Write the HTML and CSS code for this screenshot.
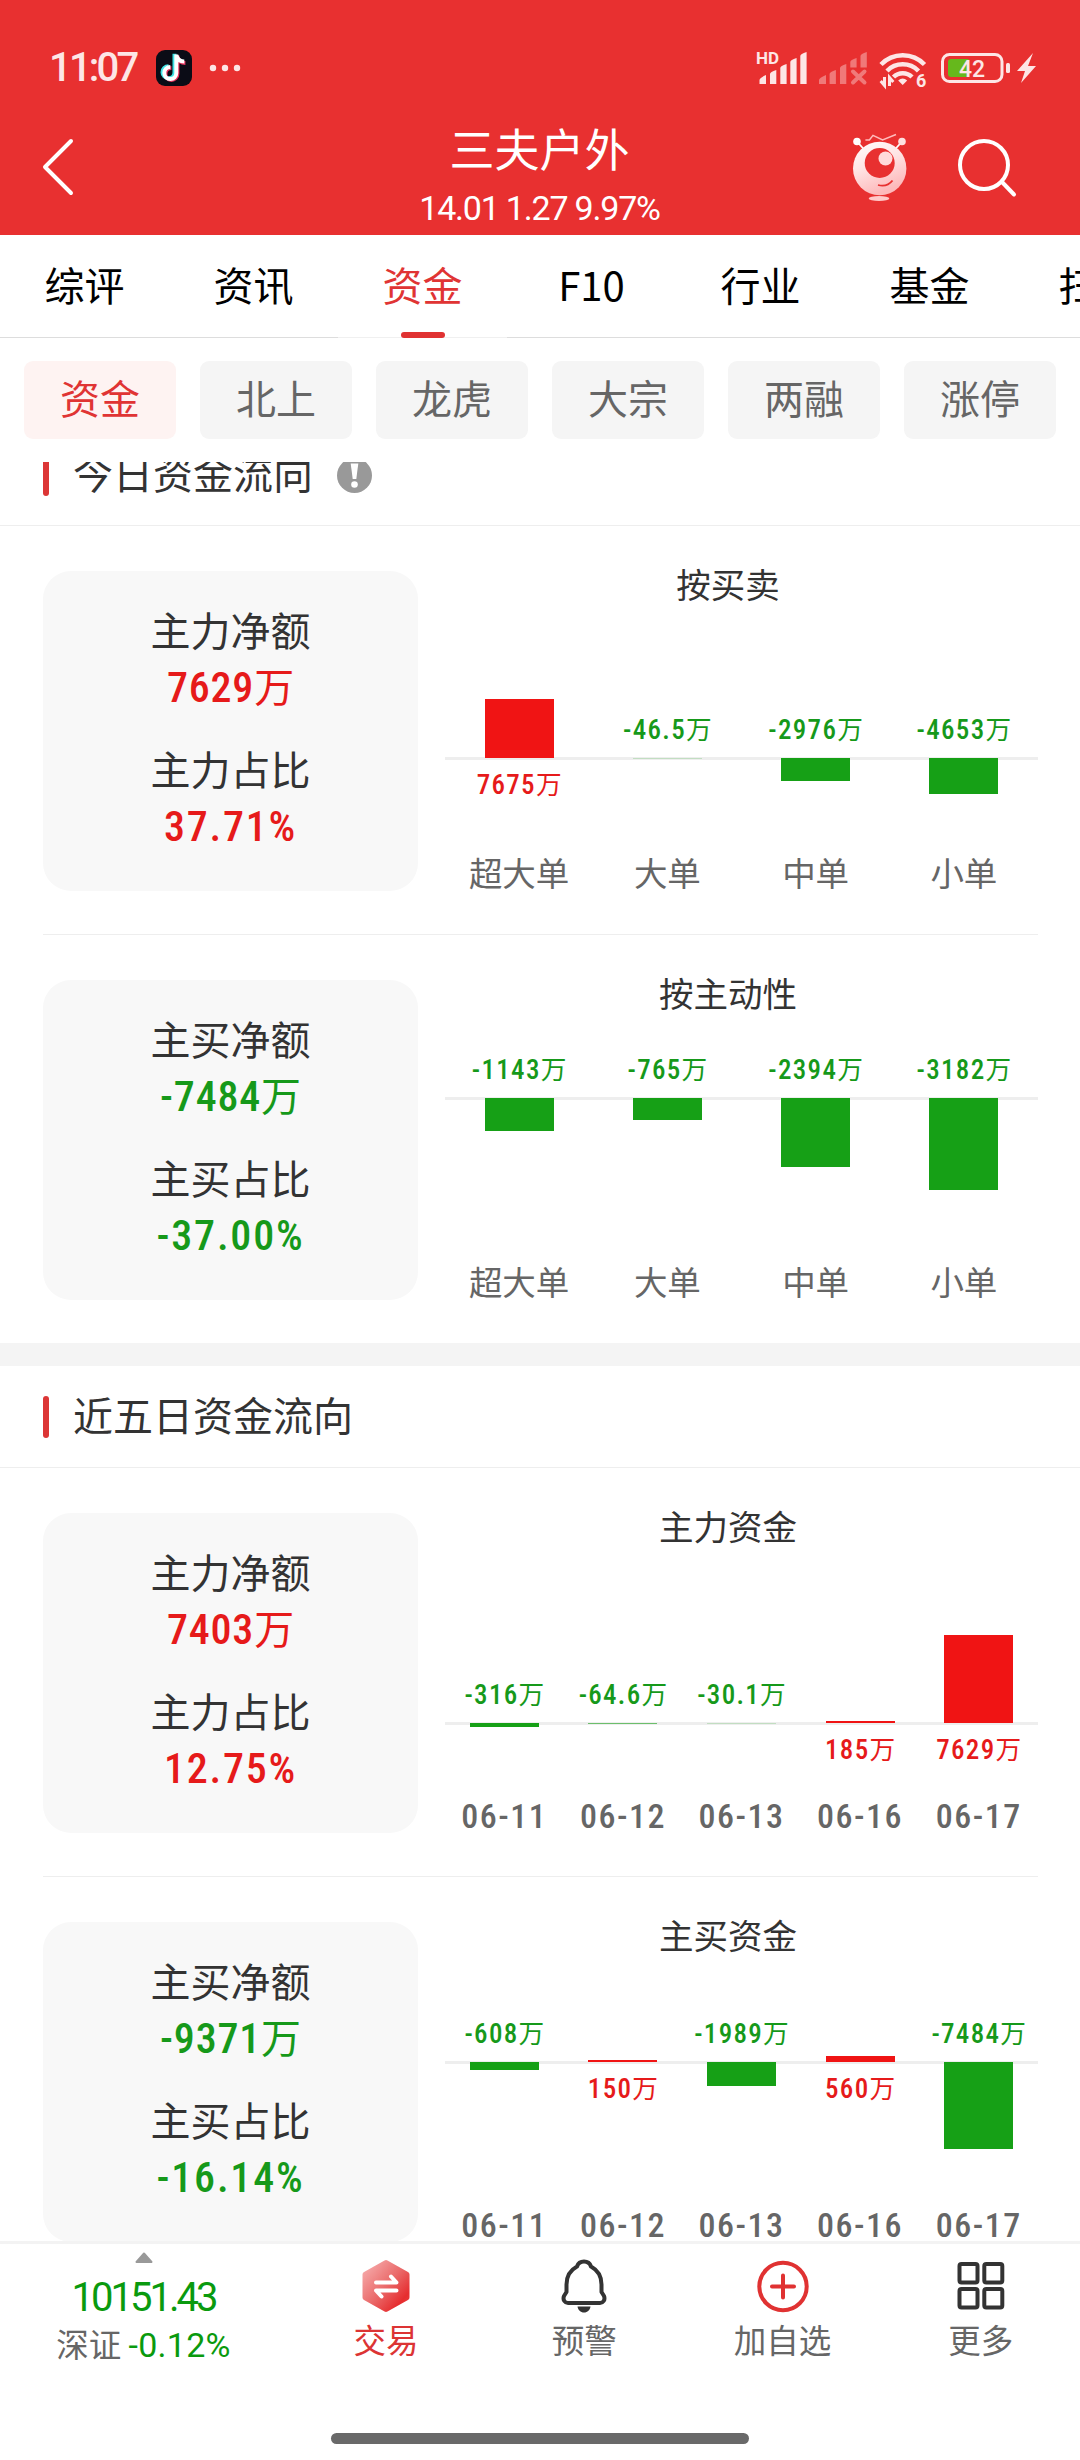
FILE: index.html
```html
<!DOCTYPE html>
<html lang="zh-CN">
<head>
<meta charset="UTF-8" />
<meta name="viewport" content="width=device-width, initial-scale=1.0" />
<title>三夫户外 - 资金</title>
<link rel="stylesheet" href="styles.css">
</head>
<body>

<header class="header">
  <div class="status">
    <span class="clock">11:07</span>
    <svg class="app-icon" width="36" height="36" viewBox="0 0 36 36">
      <rect width="36" height="36" rx="9" fill="#0b0c16"/>
      <g fill="none" stroke-width="4">
        <path d="M19 4v18.500a6 6 0 1 1-6-6M19 5c1 4 4 6.500 8 6.500" stroke="#3fe3e6" transform="translate(-.5 -.3)"/>
        <path d="M21 5v18.500a6 6 0 1 1-6-6M21 6c1 4 4 6.500 8 6.500" stroke="#e8345f" transform="translate(.4 .4)"/>
        <path d="M20.300 4.500v18.500a6 6 0 1 1-6-6M20.300 5c1 4 4 6.500 8 6.500" stroke="#fff"/>
      </g>
    </svg>
    <svg class="more-dots" width="32" height="8" viewBox="0 0 32 8" fill="#fde6e6">
      <circle cx="4" cy="4" r="3.200"/><circle cx="16" cy="4" r="3.200"/><circle cx="28" cy="4" r="3.200"/>
    </svg>
    <svg class="status-right" width="284" height="44" viewBox="756 46 284 44" fill="#fde6e6">
      <text class="hd" x="756" y="64">HD</text>
      <!-- sim 1 -->
      <path d="M759.500 84v-4q0-2 6.500-5v9zM770 84V74q0-2 6.300-4v14zM780.300 84V68q0-2 6.300-4v20zM790.300 84V62q0-2 6.300-4v26zM800.300 84V56q0-2 6.300-4v32z"/>
      <!-- sim 2 -->
      <g opacity=".4">
        <path d="M819 84v-4q0-2 7-5v9zM829.600 84V74q0-2 6.300-4v14zM840 84V68q0-2 6.300-4v20zM850.300 67.500V62q0-2 6.300-4v9.500zM860.500 67.500V56q0-2 6.300-4v15.500z"/>
        <path d="M853 71.500l11.500 11M864.500 71.500l-11.500 11" stroke="#fde6e6" stroke-width="4" stroke-linecap="round"/>
      </g>
      <!-- wifi -->
      <g fill="none" stroke="#fde6e6" stroke-width="4.500">
        <path d="M881 64.500a30 30 0 0 1 43.500 0"/>
        <path d="M887 71a22 22 0 0 1 31.500 0"/>
        <path d="M893.500 77a13 13 0 0 1 18.500 0"/>
      </g>
      <path d="M902.700 85l-4.500-4.500q4.500-4 9 0z"/>
      <path d="M884.500 77v8.500l-3.800-4.500M889.500 86v-8.500l3.800 4.500" fill="none" stroke="#fde6e6" stroke-width="3"/>
      <text class="gen" x="916" y="87">6</text>
      <!-- battery -->
      <rect x="942.500" y="54.500" width="59.500" height="27" rx="7" fill="none" stroke="#fde6e6" stroke-width="3"/>
      <path d="M951 59h17.500v18H951a3 3 0 0 1-3-3V62a3 3 0 0 1 3-3z" fill="#66b81c"/>
      <rect x="1006" y="63" width="4" height="10" rx="1.500"/>
      <text class="level" x="959" y="76.500">42</text>
      <path d="M1033 53l-16 18h8l-4 12 15-17h-8z"/>
    </svg>
  </div>
  <div class="titlebar">
    <svg class="back" width="34" height="60" viewBox="0 0 34 60">
      <path d="M29 4L3 30l26 26" fill="none" stroke="#fff" stroke-width="4" stroke-linecap="round" stroke-linejoin="round"/>
    </svg>
    <div class="stock">
      <h1>三夫户外</h1>
      <p>14.01 1.27 9.97%</p>
    </div>
    <div class="tools">
      <svg width="56" height="70" viewBox="852 132 56 70">
        <defs>
          <linearGradient id="mascot" x1="0" y1="0" x2=".4" y2="1">
            <stop offset="0" stop-color="#fff"/><stop offset=".5" stop-color="#ffe3e3"/><stop offset="1" stop-color="#fdb9bb"/>
          </linearGradient>
        </defs>
        <path d="M857 141.500l8 9M902 141.500l-8 9" stroke="#fff" stroke-width="1.800"/>
        <circle cx="857" cy="141.500" r="3.800" fill="#fff"/>
        <circle cx="902" cy="141.500" r="3.800" fill="#fde0e0"/>
        <path d="M865.400 140h4l3.600-4.600 9.600 4.600 13.400-5.500" fill="none" stroke="#fbb" stroke-width="1.500"/>
        <circle cx="879.700" cy="168.500" r="26.700" fill="url(#mascot)"/>
        <circle cx="879.700" cy="163" r="15" fill="#e83030"/>
        <circle cx="885.500" cy="158.500" r="7" fill="#ffdada"/>
        <path d="M878 185q9 2.500 14.500-4.500" fill="none" stroke="#e83030" stroke-width="1.800"/>
        <ellipse cx="879" cy="198.600" rx="10.300" ry="2.500" fill="#ffc9c9"/>
      </svg>
      <svg width="60" height="60" viewBox="0 0 60 60" fill="none" stroke="#fff" stroke-width="4" stroke-linecap="round">
        <circle cx="27" cy="27" r="24"/><path d="M45 44l12 12.500"/>
      </svg>
    </div>
  </div>
</header>

<nav class="tabs">
  <a>综评</a><a>资讯</a><a class="active">资金</a><a>F10</a><a>行业</a><a>基金</a><a>扫雷</a>
</nav>

<div class="chips">
  <span class="active">资金</span><span>北上</span><span>龙虎</span><span>大宗</span><span>两融</span><span>涨停</span>
</div>

<main class="content">
  <section class="today">
    <h2><span>今日资金流向</span>
      <svg width="35" height="35" viewBox="0 0 35 35">
        <circle cx="17.500" cy="17.500" r="17.500" fill="#999"/>
        <path d="M13.700 5.500h7.600l-2 15.500h-3.600z" fill="#fff"/><circle cx="17.500" cy="26.500" r="3.300" fill="#fff"/>
      </svg>
    </h2>
    <div class="row">
      <div class="card">
        <p>主力净额</p><b class="up">7629<span class="unit">万</span></b>
        <p>主力占比</p><b class="up pct">37.71%</b>
      </div>
      <div class="chart">
        <h3>按买卖</h3>
        <div class="plot" style="--axis: 148px">
          <div class="col"><i class="bar up" style="height: 59px"></i><em class="up">7675<span class="unit">万</span></em></div>
          <div class="col neg"><em class="down">-46.5<span class="unit">万</span></em><i class="bar down faint" style="height: 1px"></i></div>
          <div class="col neg"><em class="down">-2976<span class="unit">万</span></em><i class="bar down" style="height: 23px"></i></div>
          <div class="col neg"><em class="down">-4653<span class="unit">万</span></em><i class="bar down" style="height: 36px"></i></div>
        </div>
        <div class="labels"><span>超大单</span><span>大单</span><span>中单</span><span>小单</span></div>
      </div>
    </div>
    <div class="row">
      <div class="card">
        <p>主买净额</p><b class="down">-7484<span class="unit">万</span></b>
        <p>主买占比</p><b class="down pct">-37.00%</b>
      </div>
      <div class="chart">
        <h3>按主动性</h3>
        <div class="plot" style="--axis: 79px">
          <div class="col neg"><em class="down">-1143<span class="unit">万</span></em><i class="bar down" style="height: 33px"></i></div>
          <div class="col neg"><em class="down">-765<span class="unit">万</span></em><i class="bar down" style="height: 22px"></i></div>
          <div class="col neg"><em class="down">-2394<span class="unit">万</span></em><i class="bar down" style="height: 69px"></i></div>
          <div class="col neg"><em class="down">-3182<span class="unit">万</span></em><i class="bar down" style="height: 92px"></i></div>
        </div>
        <div class="labels"><span>超大单</span><span>大单</span><span>中单</span><span>小单</span></div>
      </div>
    </div>
  </section>

  <section>
    <h2><span>近五日资金流向</span></h2>
    <div class="row">
      <div class="card">
        <p>主力净额</p><b class="up">7403<span class="unit">万</span></b>
        <p>主力占比</p><b class="up pct">12.75%</b>
      </div>
      <div class="chart">
        <h3>主力资金</h3>
        <div class="plot" style="--axis: 171px">
          <div class="col neg"><em class="down">-316<span class="unit">万</span></em><i class="bar down" style="height: 4px"></i></div>
          <div class="col neg"><em class="down">-64.6<span class="unit">万</span></em><i class="bar down half" style="height: 1px"></i></div>
          <div class="col neg"><em class="down">-30.1<span class="unit">万</span></em><i class="bar down faint" style="height: 1px"></i></div>
          <div class="col"><i class="bar up" style="height: 2px"></i><em class="up">185<span class="unit">万</span></em></div>
          <div class="col"><i class="bar up" style="height: 88px"></i><em class="up">7629<span class="unit">万</span></em></div>
        </div>
        <div class="labels dates"><span>06-11</span><span>06-12</span><span>06-13</span><span>06-16</span><span>06-17</span></div>
      </div>
    </div>
    <div class="row">
      <div class="card">
        <p>主买净额</p><b class="down">-9371<span class="unit">万</span></b>
        <p>主买占比</p><b class="down pct">-16.14%</b>
      </div>
      <div class="chart">
        <h3>主买资金</h3>
        <div class="plot" style="--axis: 101px">
          <div class="col neg"><em class="down">-608<span class="unit">万</span></em><i class="bar down" style="height: 8px"></i></div>
          <div class="col"><i class="bar up" style="height: 2px"></i><em class="up">150<span class="unit">万</span></em></div>
          <div class="col neg"><em class="down">-1989<span class="unit">万</span></em><i class="bar down" style="height: 24px"></i></div>
          <div class="col"><i class="bar up" style="height: 6px"></i><em class="up">560<span class="unit">万</span></em></div>
          <div class="col neg"><em class="down">-7484<span class="unit">万</span></em><i class="bar down" style="height: 87px"></i></div>
        </div>
        <div class="labels dates"><span>06-11</span><span>06-12</span><span>06-13</span><span>06-16</span><span>06-17</span></div>
      </div>
    </div>
  </section>
</main>

<footer class="bottom">
  <div class="actions">
    <div class="index">
      <svg width="20" height="12" viewBox="0 0 20 12"><path d="M10 1.500L17.500 10h-15z" fill="#999" stroke="#999" stroke-width="2" stroke-linejoin="round"/></svg>
      <strong>10151.43</strong>
      <span>深证 <b>-0.12%</b></span>
    </div>
    <a class="trade">
      <svg width="54" height="54" viewBox="0 0 54 54">
        <defs>
          <linearGradient id="hex" x1="0" y1="0" x2="1" y2="1">
            <stop offset="0" stop-color="#f7aeae"/><stop offset=".5" stop-color="#ea6a6a"/><stop offset=".85" stop-color="#e62d2f"/><stop offset="1" stop-color="#e83c3c"/>
          </linearGradient>
        </defs>
        <path d="M27 4L47.500 15.500v23L27 50 6.500 38.500v-23z" fill="url(#hex)" stroke="url(#hex)" stroke-width="6" stroke-linejoin="round"/>
        <path d="M17 23.500h20.500l-5.500-6M37.500 31.500H17l5.500 6" fill="none" stroke="#fff" stroke-width="4" stroke-linecap="round" stroke-linejoin="round"/>
      </svg>
      交易
    </a>
    <a>
      <svg width="54" height="54" viewBox="0 0 54 54">
        <path d="M27 2.500c3.500 0 6 2 7 5 6.500 3.500 10.500 10 10.500 18v7.500l2.500 4c1.500 4-1 7-4 7H11c-3 0-5.500-3-4-7l2.500-4V25.500c0-8 4-14.500 10.500-18 1-3 3.500-5 7-5z" fill="none" stroke="#333" stroke-width="4" stroke-linejoin="round"/>
        <path d="M20.500 47.500h13c-.5 3.500-3 6-6.500 6s-6-2.500-6.500-6z" fill="#333"/>
      </svg>
      预警
    </a>
    <a>
      <svg width="54" height="54" viewBox="0 0 54 54" fill="none" stroke="#e03232" stroke-width="4" stroke-linecap="round">
        <circle cx="27" cy="27.500" r="23.700"/><path d="M16 27.500h22M27 16.500v22"/>
      </svg>
      加自选
    </a>
    <a>
      <svg width="54" height="54" viewBox="0 0 54 54" fill="none" stroke="#333" stroke-width="4">
        <rect x="5.500" y="5" width="18" height="18.500" rx="2"/><rect x="30.300" y="5" width="18" height="18.500" rx="2"/>
        <rect x="5.500" y="30" width="18" height="18.500" rx="2"/><rect x="30.300" y="30" width="18" height="18.500" rx="2"/>
      </svg>
      更多
    </a>
  </div>
  <div class="home-bar"></div>
</footer>

</body>
</html>
```

FILE: styles.css
```css
* {
  box-sizing: border-box;
  margin: 0;
  padding: 0;
}
body {
  width: 1080px;
  height: 2460px;
  display: flex;
  flex-direction: column;
  overflow: hidden;
  background: #fff;
  color: #333;
  font-family: "Noto Sans CJK SC", sans-serif;
}
svg {
  display: block;
  flex: none;
}
h1, h2, h3, b, strong {
  font-weight: 400;
}
i, em {
  font-style: normal;
}

/* header */
.header {
  height: 235px;
  flex: none;
  background: #e83030;
  color: #fff;
}
.status {
  height: 90px;
  padding: 46px 40px 0 49px;
  display: flex;
  align-items: center;
}
.clock {
  width: 107px;
  font: 500 40px/44px Roboto, sans-serif;
  letter-spacing: -2.8px;
  color: #fde6e6;
  white-space: nowrap;
}
.more-dots {
  margin-left: 17px;
}
.status-right {
  margin-left: auto;
}
.hd {
  font: 700 17px Roboto, sans-serif;
}
.gen {
  font: 700 18px Roboto, sans-serif;
}
.level {
  font: 500 23px Roboto, sans-serif;
}
.titlebar {
  height: 145px;
  padding: 0 64px 0 42px;
  display: grid;
  grid-template-columns: 230px 1fr 230px;
  align-items: start;
}
.back {
  margin-top: 47px;
}
.stock {
  padding: 28px 0 0 21px;
  text-align: center;
}
.stock h1 {
  font-size: 45px;
  line-height: 60px;
}
.stock p {
  font: 400 34px/60px Roboto, sans-serif;
  letter-spacing: -1.2px;
}
.tools {
  display: flex;
  justify-content: flex-end;
  gap: 49px;
  padding-top: 42px;
}
.tools svg:last-child {
  margin-top: 6px;
  margin-right: -1px;
}

/* tabs */
.tabs {
  height: 103px;
  flex: none;
  display: flex;
  overflow: hidden;
}
.tabs a {
  flex: 0 0 169px;
  height: 103px;
  border-bottom: 1px solid #ddd;
  text-align: center;
  font-size: 40px;
  line-height: 98px;
  color: #000;
}
.tabs .active {
  color: #e03434;
  border-color: #f0f0f0;
}
.tabs .active::after {
  content: "";
  display: block;
  width: 44px;
  height: 6px;
  margin: -1px auto 0;
  border-radius: 3px;
  background: #e03232;
}
.chips {
  height: 124px;
  flex: none;
  padding: 23px 24px;
  display: flex;
  gap: 24px;
}
.chips span {
  flex: 1;
  border-radius: 9px;
  background: #f5f5f5;
  color: #666;
  text-align: center;
  font-size: 40px;
  line-height: 73px;
}
.chips .active {
  background: #fef3f2;
  color: #e03434;
}

/* scrolled list */
.content {
  height: 1779px;
  flex: none;
  overflow: hidden;
}
.today {
  margin-top: -38px;
  border-bottom: 23px solid #f4f4f4;
}
h2 {
  height: 102px;
  padding-left: 43px;
  border-bottom: 1px solid #eee;
  display: flex;
  align-items: center;
  font-size: 40px;
  line-height: 60px;
}
h2::before {
  content: "";
  width: 6px;
  height: 42px;
  margin-right: 24px;
  border-radius: 3px;
  background: #dc3636;
}
h2 span {
  padding-bottom: 6px;
}
h2 svg {
  margin: 2px 0 0 24px;
}
.row {
  height: 409px;
  margin: 0 42px 0 43px;
  padding-top: 45px;
  border-bottom: 1px solid #eee;
  display: flex;
}
.row:last-child {
  height: 408px;
  border-bottom: none;
}
.card {
  width: 375px;
  height: 320px;
  padding-top: 30px;
  border-radius: 28px;
  background: #f8f8f8;
  text-align: center;
  font-size: 40px;
  line-height: 56px;
}
.card p {
  margin-bottom: 3px;
}
.card b {
  display: block;
  height: 56px;
  margin-bottom: 24px;
  font-family: Roboto, "Noto Sans CJK SC", sans-serif;
  font-size: 42px;
  font-stretch: 87%;
  font-weight: 500;
  letter-spacing: .8px;
}
.card .pct {
  letter-spacing: 1.800px;
}
.unit {
  font-size: .95em;
  font-weight: 400;
  letter-spacing: 0;
}
.up {
  color: #e61a1a;
}
.down {
  color: #16991a;
}
.chart {
  flex: 1;
  margin-top: -13px;
  padding-left: 27px;
}
.chart h3 {
  margin: 0 0 2px -27px;
  text-align: center;
  font-size: 34.5px;
  line-height: 50px;
}
.plot {
  height: 240px;
  display: flex;
  background: linear-gradient(#eee, #eee) 0 calc(var(--axis) - 1px) / 100% 3px no-repeat;
}
/* two cells per column: above and below the axis */
.col {
  flex: 1;
  display: grid;
  grid-template-rows: var(--axis) 1fr;
  justify-items: center;
}
.bar {
  width: 69px;
  align-self: end;
  background: #f01414;
}
.neg .bar {
  align-self: start;
  background: #16a016;
}
.faint {
  opacity: .2;
}
.half {
  opacity: .6;
}
.col em {
  height: 30px;
  margin-top: 12px;
  font: 500 27px/30px Roboto, "Noto Sans CJK SC", sans-serif;
  font-stretch: 87%;
  letter-spacing: 1.300px;
  white-space: nowrap;
}
.neg em {
  align-self: end;
  margin: 0 0 13px;
}
.labels {
  display: flex;
  font-size: 33.5px;
  line-height: 43px;
  color: #666;
}
.labels span {
  flex: 1;
  text-align: center;
}
.dates {
  font-family: Roboto, sans-serif;
  font-stretch: 87%;
  font-size: 34px;
  font-weight: 500;
  letter-spacing: 1.500px;
  line-height: 49px;
}

/* bottom bar */
.bottom {
  height: 219px;
  flex: none;
  border-top: 3px solid #f3f3f3;
  background: #fff;
}
.actions {
  height: 189px;
  display: flex;
  color: #666;
}
.index {
  width: 287px;
  padding-top: 8px;
  display: flex;
  flex-direction: column;
  align-items: center;
}
.index strong {
  font: 400 40px/50px Roboto, sans-serif;
  letter-spacing: -3px;
  color: #0a9a0e;
  margin-top: 9px;
}
.index span {
  margin-top: -3px;
  font-size: 32.500px;
  line-height: 46px;
  white-space: nowrap;
}
.index b {
  font: 400 34px/46px Roboto, sans-serif;
  letter-spacing: .3px;
  color: #0a9a0e;
}
.actions a {
  flex: 1;
  padding-top: 15px;
  display: flex;
  flex-direction: column;
  align-items: center;
  font-size: 32.500px;
  line-height: 51px;
}
.actions .trade {
  color: #dc3434;
}
.home-bar {
  width: 418px;
  height: 11px;
  margin: 0 auto;
  border-radius: 6px;
  background: #696969;
}
```
